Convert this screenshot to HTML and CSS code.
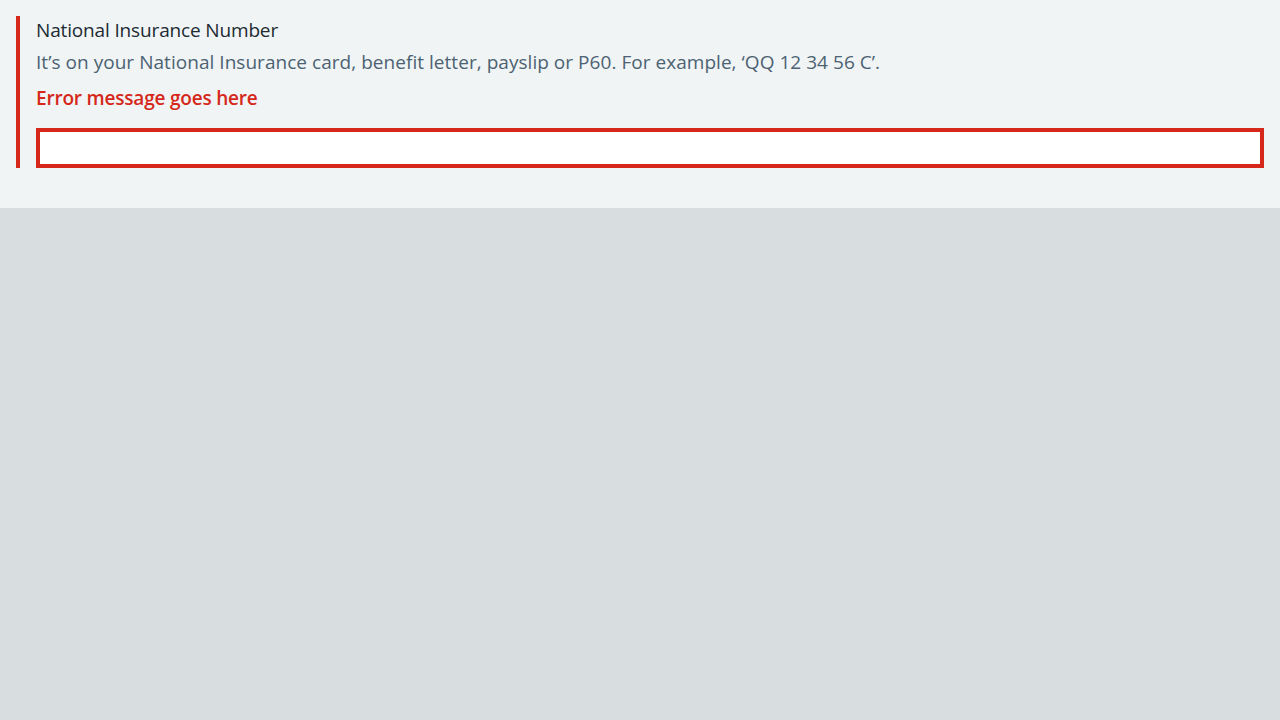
FILE: index.html
```html
<!DOCTYPE html>
<html lang="en">
<head>
<meta charset="utf-8">
<title>National Insurance Number</title>
<link rel="stylesheet" href="styles.css">
</head>
<body>
<div class="panel">
  <div class="form-group form-group--error">
    <label class="label" for="ni">National Insurance Number</label>
    <div class="hint">It’s on your National Insurance card, benefit letter, payslip or P60. For example, ‘QQ 12 34 56 C’.</div>
    <span class="error-message">Error message goes here</span>
    <input class="input input--error" id="ni" type="text">
  </div>
</div>
</body>
</html>
```
FILE: styles.css
```css
html, body {
  margin: 0;
  padding: 0;
  background: #d8dde0;
}
body {
  font-family: "Open Sans", "Noto Sans", sans-serif;
  font-size: 19px;
  line-height: 28px;
  color: #212b32;
}
.panel {
  background: #f0f4f5;
  padding: 16px 16px 40px 16px;
}
.form-group {
  display: flex;
  flex-direction: column;
}
.form-group--error {
  border-left: 4px solid #d5281b;
  padding-left: 16px;
}
.label {
  display: block;
  margin-bottom: 4px;
  color: #212b32;
  letter-spacing: -0.15px;
}
.hint {
  color: #4c6272;
  margin-bottom: 8px;
  letter-spacing: 0.04px;
}
.error-message {
  display: block;
  color: #d5281b;
  font-weight: 600;
  margin-bottom: 16px;
  letter-spacing: -0.2px;
}
.input {
  box-sizing: border-box;
  height: 40px;
  width: 100%;
  margin: 0;
  padding: 4px;
  border: 4px solid #d5281b;
  border-radius: 0;
  background: #ffffff;
  font: inherit;
  outline: none;
}
```
